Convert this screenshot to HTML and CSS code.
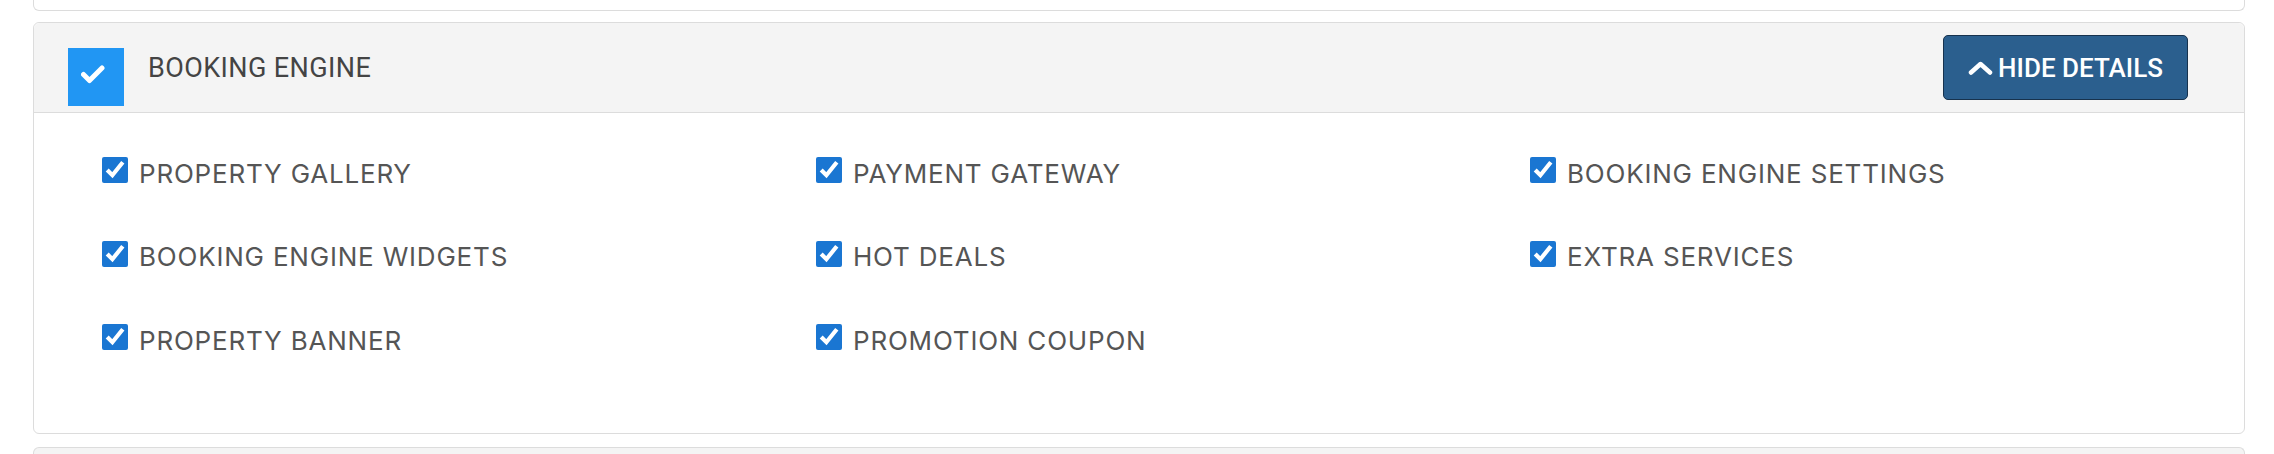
FILE: index.html
```html
<!DOCTYPE html>
<html lang="en">
<head>
    <meta charset="UTF-8">
    <title>Permissions - Booking Engine</title>
    <link rel="stylesheet" href="styles.css">
</head>
<body>
    <div class="panel panel-prev"></div>

    <div class="panel">
        <div class="panel-head">
            <span class="module-check">
                <svg width="24" height="20" viewBox="0 0 24 20"><path d="M2.5 10.5 L8.5 16.5 L21 4" fill="none" stroke="#fff" stroke-width="5" stroke-linecap="round" stroke-linejoin="round"/></svg>
            </span>
            <span class="module-title">BOOKING ENGINE</span>
            <button class="btn-toggle">
                <svg width="25" height="14" viewBox="0 0 25 14"><path d="M3 11.5 L12.5 3 L22 11.5" fill="none" stroke="#fff" stroke-width="4.5" stroke-linecap="round" stroke-linejoin="round"/></svg>
                HIDE DETAILS
            </button>
        </div>
        <div class="panel-body">
            <label class="perm"><input type="checkbox" checked><span>PROPERTY GALLERY</span></label>
            <label class="perm"><input type="checkbox" checked><span>PAYMENT GATEWAY</span></label>
            <label class="perm"><input type="checkbox" checked><span>BOOKING ENGINE SETTINGS</span></label>
            <label class="perm"><input type="checkbox" checked><span>BOOKING ENGINE WIDGETS</span></label>
            <label class="perm"><input type="checkbox" checked><span>HOT DEALS</span></label>
            <label class="perm"><input type="checkbox" checked><span>EXTRA SERVICES</span></label>
            <label class="perm"><input type="checkbox" checked><span>PROPERTY BANNER</span></label>
            <label class="perm"><input type="checkbox" checked><span>PROMOTION COUPON</span></label>
        </div>
    </div>

    <div class="panel panel-next"></div>
</body>
</html>
```

FILE: styles.css
```css
body {
    margin: 0;
    background: #fff;
    font-family: Roboto, 'Liberation Sans', sans-serif;
    color: #444;
}
.panel {
    margin: 0 29px 11px 33px;
    border: 1px solid #dcdcdc;
    border-radius: 6px;
    background: #fff;
}
.panel-prev {
    height: 10px;
    border-top: none;
    border-radius: 0 0 6px 6px;
}
.panel-next {
    height: 7px;
    margin-top: 13px;
    margin-bottom: 0;
    border-bottom: none;
    border-radius: 6px 6px 0 0;
    background: #f4f4f4;
}
.panel-head {
    display: flex;
    align-items: center;
    height: 89px;
    padding: 0 56px 0 34px;
    background: #f4f4f4;
    border-bottom: 1px solid #dcdcdc;
    border-radius: 6px 6px 0 0;
}
.module-check {
    display: flex;
    align-items: center;
    justify-content: center;
    width: 56px;
    height: 58px;
    align-self: flex-end;
    margin-bottom: 6px;
    background: #2196f3;
}
.module-check svg {
    margin: -6px 6px 0 0;
}
.module-title {
    margin-left: 24px;
    font-size: 27px;
    letter-spacing: 0.4px;
    color: #444;
}
.btn-toggle {
    margin-left: auto;
    display: flex;
    align-items: center;
    gap: 5px;
    height: 65px;
    padding: 0 24px;
    border: 1px solid #17324d;
    border-radius: 5px;
    background: #2b5f8e;
    color: #fff;
    font-family: Roboto, 'Liberation Sans', sans-serif;
    font-size: 26px;
    font-weight: 500;
    cursor: pointer;
}
.panel-body {
    display: grid;
    grid-template-columns: repeat(3, 1fr);
    row-gap: 47.5px;
    padding: 39px 0 78px 68px;
}
.perm {
    display: flex;
    align-items: center;
    height: 36px;
    font-family: Inter, sans-serif;
    font-size: 26px;
    letter-spacing: 0.8px;
    color: #555;
}
.perm span {
    padding-top: 6px;
}
.perm input {
    width: 26px;
    height: 26px;
    margin: 0 11px 0 0;
    accent-color: #1a76d2;
}
```
